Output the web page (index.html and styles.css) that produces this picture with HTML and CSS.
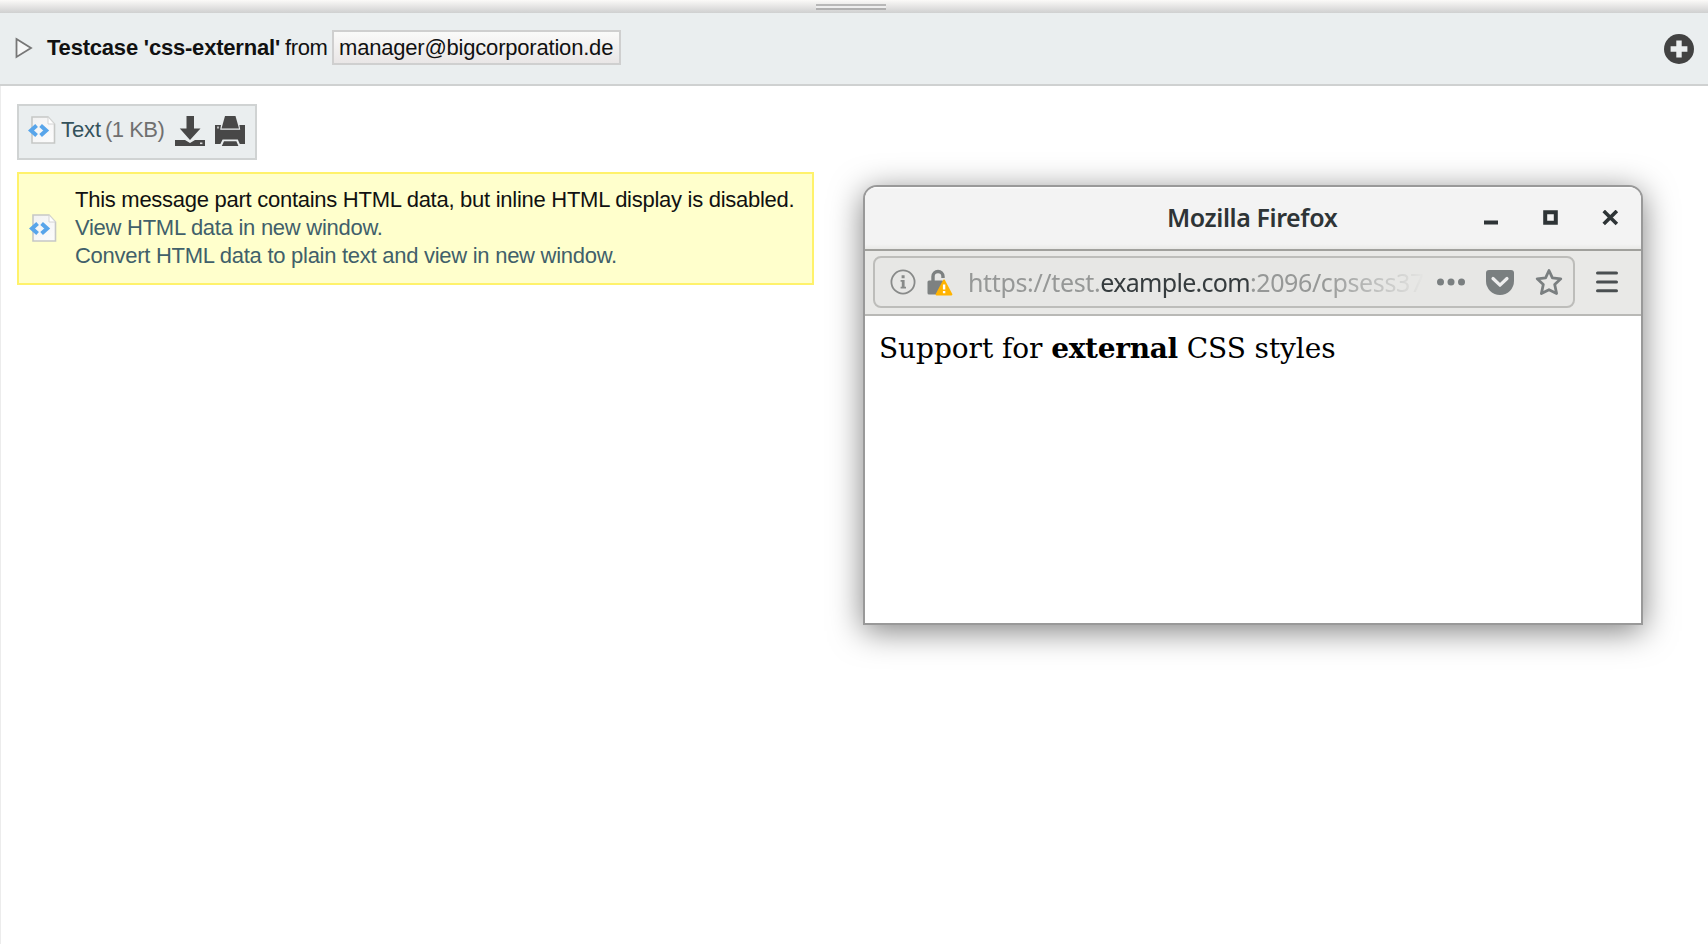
FILE: index.html
```html
<!DOCTYPE html>
<html lang="en">
<head>
<meta charset="utf-8">
<title>Testcase 'css-external'</title>
<link rel="stylesheet" href="styles.css">
</head>
<body>
<svg width="0" height="0" class="defs">
  <defs>
    <linearGradient id="paper" x1="0" y1="0" x2="1" y2="1"><stop offset="0" stop-color="#f2f2f2"/><stop offset="1" stop-color="#fcfcfc"/></linearGradient>
    <symbol id="html-file" viewBox="0 0 28 28">
      <path d="M4 1H20L26.5 8V27H4Z" fill="url(#paper)" stroke="#c6c8c6" stroke-width="1.6"/>
      <path d="M20 1V8H26.5Z" fill="#fff" stroke="#d4d4d4" stroke-width="1"/>
      <path d="M8.6 9.5L3 14.5L8.6 19.5M12.6 9.5L18.2 14.5L12.6 19.5" fill="none" stroke="#58a5ea" stroke-width="4"/>
    </symbol>
  </defs>
</svg>
<div class="splitter"><div class="grip"></div></div>
<header class="header">
  <svg class="expand" width="18" height="22" viewBox="0 0 18 22"><path d="M1.5 2L16 11L1.5 20Z" fill="#f6f7f7" stroke="#777" stroke-width="1.8"/></svg>
  <strong class="subject">Testcase 'css-external'</strong>
  <span class="from">from</span>
  <span class="address">manager@bigcorporation.de</span>
  <svg class="add" width="32" height="32" viewBox="0 0 32 32"><circle cx="16" cy="16" r="15" fill="#424242"/><path d="M13.3 7.6H18.7V13.3H24.4V18.7H18.7V24.4H13.3V18.7H7.6V13.3H13.3Z" fill="#ebeeef"/></svg>
</header>
<main class="content">
  <section class="attachment">
    <svg class="file" width="28" height="28"><use href="#html-file"/></svg>
    <span class="part-name">Text</span>
    <span class="part-size">(1 KB)</span>
    <svg class="download" width="30" height="31" viewBox="0 0 30 31"><path d="M11.5 0H19V12.5H25.5L15 24L4.8 12.5H11.5Z" fill="#484848"/><path d="M0 24H10L15 27L20 24H30V30H0Z" fill="#484848"/><rect x="25" y="26.5" width="2.4" height="1.6" fill="#ddd"/></svg>
    <svg class="print" width="30" height="31" viewBox="0 0 30 31"><path d="M10 0H20.5L24 12.5H6.5Z" fill="#484848"/><path d="M0 9H6L5.2 13.8H25.2L24.4 9H30V28H24.8L22.8 23.6H7.6L5.4 28H0Z" fill="#484848"/><path d="M9 25.2H21.4L23.4 30H6.8Z" fill="#484848"/><rect x="2" y="10.5" width="2" height="2" fill="#bbb"/></svg>
  </section>
  <section class="notice">
    <svg class="file" width="28" height="28"><use href="#html-file"/></svg>
    <div class="notice-text">
      <div class="l1">This message part contains HTML data, but inline HTML display is disabled.</div>
      <a class="l2">View HTML data in new window.</a>
      <a class="l3">Convert HTML data to plain text and view in new window.</a>
    </div>
  </section>
</main>
<div class="window">
  <div class="titlebar">
    <span class="title">Mozilla Firefox</span>
    <svg class="controls" width="136" height="16" viewBox="0 0 136 16"><path d="M0 10.5H14V14.5H0Z" fill="#2e3436"/><path d="M61.2 2.2V12.8H71.8V2.2Z" fill="none" stroke="#2e3436" stroke-width="4"/><path d="M121 2.2L131.6 12.8M131.6 2.2L121 12.8" fill="none" stroke="#2e3436" stroke-width="3.6" stroke-linecap="square"/></svg>
  </div>
  <div class="toolbar">
    <div class="urlbar">
      <svg class="info" width="26" height="26" viewBox="0 0 26 26"><circle cx="13" cy="13" r="11.6" fill="none" stroke="#888a89" stroke-width="1.8"/><path d="M11.6 6.2H14.6V9.2H11.6ZM10.6 11H14.6V17.8H16V19.6H10.6V17.8H11.8V12.8H10.6Z" fill="#888a89"/></svg>
      <svg class="lock" width="26" height="27" viewBox="0 0 26 27"><path d="M6 12V7.5A5 5 0 0 1 16 7.5V9" fill="none" stroke="#7d8181" stroke-width="3.4"/><rect x="0.5" y="11.5" width="16" height="14" rx="1.5" fill="#7d8181"/><path d="M17 11.5L24.4 25.4H9.6Z" fill="#ffb300" stroke="#ffb300" stroke-width="2" stroke-linejoin="round"/><path d="M15.9 15.5H18.3V20.6H15.9ZM15.9 22H18.3V24.3H15.9Z" fill="#fff"/></svg>
      <div class="url"><span class="u1">https://test.</span><span class="host">example.com</span><span class="u3">:2096/cpsess37</span></div>
      <svg class="dots" width="28" height="8" viewBox="0 0 28 8"><g fill="#7a7f80"><circle cx="3.5" cy="4" r="3.5"/><circle cx="14" cy="4" r="3.5"/><circle cx="24.5" cy="4" r="3.5"/></g></svg>
      <svg class="pocket" width="28" height="25" viewBox="0 0 28 25"><path d="M3 0H25Q28 0 28 3V11A14 14 0 0 1 0 11V3Q0 0 3 0Z" fill="#7a7f80"/><path d="M7 8.5L14 15.2L21 8.5" fill="none" stroke="#eee" stroke-width="3.2" stroke-linecap="round" stroke-linejoin="round"/></svg>
      <svg class="star" width="28" height="28" viewBox="0 0 28 28"><path d="M14 2.5L17.4 9.8L25.8 10.8L19.7 16.5L21.6 25.5L14 21.7L6.4 25.5L8.3 16.5L2.2 10.8L10.6 9.8Z" fill="none" stroke="#7a7f80" stroke-width="2.8" stroke-linejoin="round"/></svg>
    </div>
    <svg class="menu" width="22" height="22" viewBox="0 0 22 22"><path d="M1.5 2H20.5M1.5 11H20.5M1.5 19.7H20.5" stroke="#4a4f51" stroke-width="3" stroke-linecap="round"/></svg>
  </div>
  <div class="page">Support for <b>external</b> CSS styles</div>
</div>
</body>
</html>
```
FILE: styles.css
```css
* { box-sizing: border-box; }
html, body { height: 944px; overflow: hidden; }
body { margin: 0; background: #fff; font: 22px/28px "Liberation Sans", Arial, sans-serif; color: #111; box-shadow: inset 1px 0 #ececec; }
svg { display: block; flex: none; }
.defs { position: absolute; }
span, strong, a, .l1 { white-space: nowrap; flex: none; }
.splitter { height: 13px; background: linear-gradient(#fbfaf8, #d6d6d6 85%, #cfd0d0); display: flex; justify-content: center; padding: 4px 7px 0 0; }
.grip { width: 70px; height: 6px; border-top: 2px solid #b8b8b8; border-bottom: 2px solid #b0b0b0; background: #eee; }
.header { height: 73px; background: #eaeeef; border-bottom: 2px solid #cfd1d1; display: flex; align-items: center; padding: 0 13px 1px 15px; }
.subject { margin-left: 14px; width: 238px; letter-spacing: -0.2px; }
.from { width: 40px; letter-spacing: -0.4px; }
.address { margin: -1px 0 0 7px; width: 289px; height: 35px; line-height: 31px; padding-left: 5px; border: 2px solid #cfcfcf; background: linear-gradient(#fafaf9, #e9e6e6); letter-spacing: -0.2px; }
.add { margin: 1px 0 0 auto; }
.content { padding: 18px 0 0 17px; display: flex; flex-direction: column; align-items: flex-start; gap: 12px; }
.attachment { width: 240px; height: 56px; border: 2px solid #d0d3d3; background: #eaeeef; display: flex; align-items: center; padding: 0 0 2px 9px; }
.attachment .file { margin-top: -3px; }
.part-name { margin: -3px 0 0 5px; width: 44px; color: #34525c; letter-spacing: -0.1px; }
.part-size { margin-top: -3px; width: 60px; color: #707070; letter-spacing: -0.5px; }
.download { margin: 1px 0 0 10px; }
.print { margin: 1px 0 0 10px; }
.notice { width: 797px; height: 113px; background: #ffffcc; border: 2px solid #fff26b; display: flex; align-items: center; padding: 0 0 1px 10px; }
.notice-text { margin-left: 18px; letter-spacing: -0.27px; }
.notice-text > * { display: block; width: max-content; height: 28px; }
.notice a { color: #41606a; }
.window { position: absolute; left: 863px; top: 185px; width: 780px; height: 440px; border: 2px solid #999; border-radius: 14px 14px 0 0; background: #fff; box-shadow: 0 6px 32px rgba(0,0,0,.5); overflow: hidden; }
.titlebar { height: 64px; background: linear-gradient(#fff, #f3f3f3 2px, #f3f3f3 92%, #e9e9e7); border-bottom: 2px solid #a0a09c; display: flex; align-items: center; padding: 0 0 2px 302px; font: 600 25px/34px "Noto Sans", sans-serif; color: #2e3436; }
.title { width: 170px; letter-spacing: -0.42px; }
.controls { margin: 1px 0 0 147px; }
.toolbar { height: 65px; background: #e9e9e7; border-bottom: 2px solid #b9b9b6; display: flex; align-items: center; padding: 0 0 1px 8px; }
.urlbar { width: 702px; height: 52px; border: 2px solid #bdbdba; border-radius: 8px; background: #e7e7e5; display: flex; align-items: center; padding-left: 15px; }
.lock { margin-left: 11px; }
.url { margin-left: 15px; width: 457px; display: flex; font: 25px/34px "Noto Sans", sans-serif; color: #969897; -webkit-mask-image: linear-gradient(to right, #000 78%, transparent 100%); mask-image: linear-gradient(to right, #000 78%, transparent 100%); }
.u1 { letter-spacing: -0.36px; }
.host { color: #363c3e; letter-spacing: -0.7px; }
.u3 { letter-spacing: -0.38px; }
.dots { margin-left: 12px; }
.pocket { margin-left: 21px; }
.star { margin-left: 21px; }
.menu { margin-left: 21px; }
.page { padding: 16px 0 0 14px; font: 28px/34px "DejaVu Serif", serif; color: #000; letter-spacing: -0.07px; }
.page b { letter-spacing: -0.3px; }
```
